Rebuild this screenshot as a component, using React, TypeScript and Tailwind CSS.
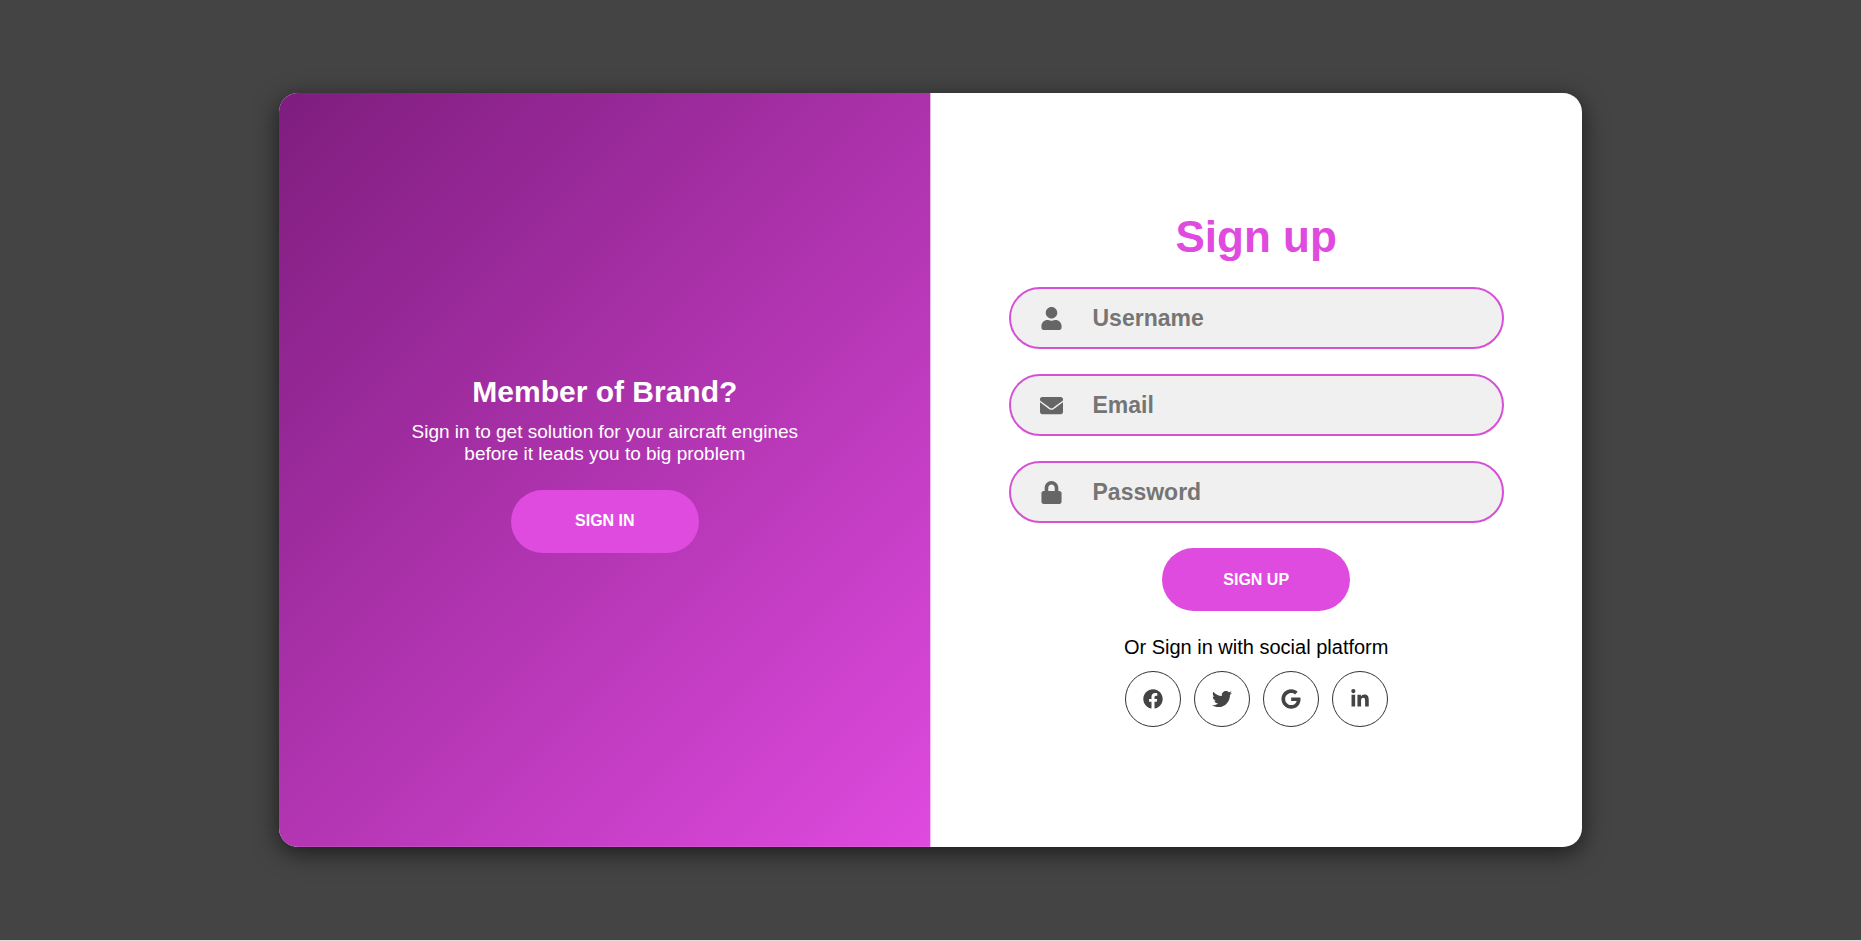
import type { ComponentType, InputHTMLAttributes } from "react";
import {
  FaEnvelope,
  FaFacebook,
  FaGoogle,
  FaLinkedinIn,
  FaLock,
  FaTwitter,
  FaUser,
} from "react-icons/fa";

type Icon = ComponentType<{ className?: string; "aria-hidden"?: boolean }>;

interface FieldProps extends InputHTMLAttributes<HTMLInputElement> {
  id: string;
  label: string;
  icon: Icon;
}

function Field({ id, label, icon: FieldIcon, ...input }: FieldProps) {
  return (
    <div className="flex h-[62px] w-full items-center rounded-full border-2 border-[#d650d6] bg-[#f0f0f0]">
      <label htmlFor={id} aria-label={label} className="flex flex-1 justify-center">
        <FieldIcon aria-hidden className="size-[23px] text-[#666]" />
      </label>
      <input
        id={id}
        name={id}
        placeholder={label}
        className="h-full min-w-0 flex-5 bg-transparent text-[23px] font-bold text-[#444] outline-none placeholder:text-[#757575]"
        {...input}
      />
    </div>
  );
}

const pill =
  "h-[63px] w-[188px] cursor-pointer rounded-full bg-[#df4adf] text-base font-bold text-white uppercase hover:bg-[#c03cc0]";

const socials: { name: string; icon: Icon }[] = [
  { name: "Facebook", icon: FaFacebook },
  { name: "Twitter", icon: FaTwitter },
  { name: "Google", icon: FaGoogle },
  { name: "LinkedIn", icon: FaLinkedinIn },
];

export default function App() {
  return (
    <main className="flex min-h-screen items-center justify-center border-b border-[#e6dcdc] bg-[#444] font-['Liberation_Sans',Arial,sans-serif]">
      <div className="flex min-h-[calc(80vh+1px)] w-[70vw] overflow-hidden rounded-[19px] bg-white shadow-[0_6px_25px_rgba(0,0,0,0.6)]">
        <section className="flex w-1/2 flex-col items-center justify-center bg-[linear-gradient(-45deg,#df4adf_0%,#520852_100%)] bg-[length:200%_100%] bg-right bg-no-repeat px-[6%] pb-3 text-center text-white">
          <h2 className="text-[30px] leading-[34px] font-bold">Member of Brand?</h2>
          <p className="mt-3 mb-[25px] max-w-[400px] text-[19px] leading-[22px]">
            Sign in to get solution for your aircraft engines before it leads you to big problem
          </p>
          <button type="button" className={pill}>
            Sign in
          </button>
        </section>

        <form
          className="flex w-1/2 flex-col items-center justify-center px-[6%]"
          onSubmit={(event) => event.preventDefault()}
        >
          <h1 className="text-[44px] leading-[50px] font-bold text-[#df4adf]">Sign up</h1>
          <div className="my-[25px] flex w-full flex-col items-center gap-[25px]">
            <Field id="username" label="Username" icon={FaUser} type="text" autoComplete="username" />
            <Field id="email" label="Email" icon={FaEnvelope} type="email" autoComplete="email" />
            <Field id="password" label="Password" icon={FaLock} type="password" autoComplete="new-password" />
            <button type="submit" className={pill}>
              Sign up
            </button>
          </div>
          <p className="mb-3 text-[20px] leading-[23px] text-black">Or Sign in with social platform</p>
          <div className="flex gap-[13px]">
            {socials.map(({ name, icon: SocialIcon }) => (
              <a
                key={name}
                href="#"
                aria-label={name}
                className="flex size-14 items-center justify-center rounded-full border border-[#333] text-[#444] hover:border-[#df4adf] hover:text-[#df4adf]"
              >
                <SocialIcon aria-hidden className="size-5" />
              </a>
            ))}
          </div>
        </form>
      </div>
    </main>
  );
}
